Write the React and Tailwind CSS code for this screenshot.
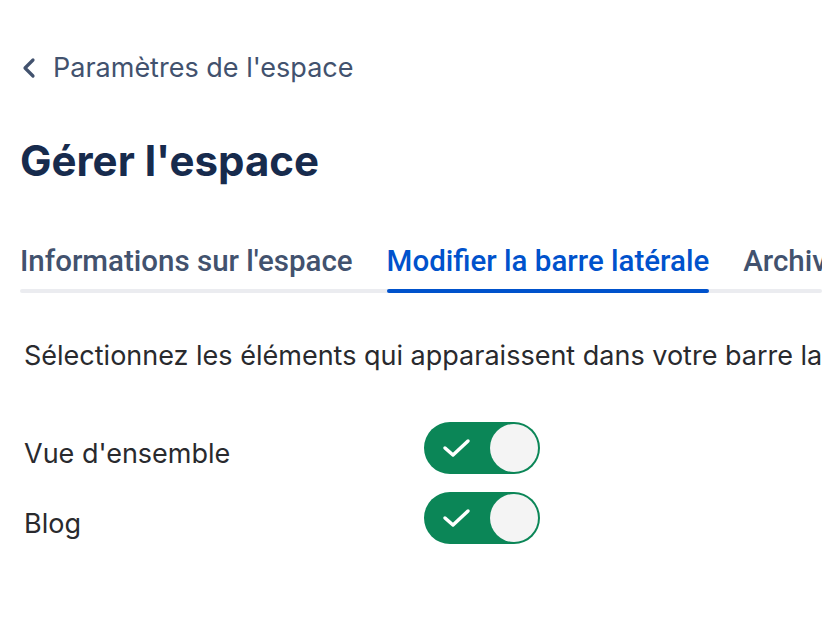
import { useState } from 'react';

export default function App() {
  const [items, setItems] = useState({ overview: true, blog: true });

  return (
    <div className="min-h-screen bg-white pl-5 pt-[46px] overflow-hidden" style={{ fontFamily: 'Inter, "Noto Sans", sans-serif' }}>
      <a className="flex items-center gap-[13px] text-[27px] leading-[44px] text-[#42526e]">
        <svg width="20" height="22" viewBox="0 0 20 22" fill="none">
          <path d="M13 3 L5 11 L13 19" stroke="#42526e" strokeWidth="3.2" strokeLinecap="round" strokeLinejoin="round" />
        </svg>
        <span>Paramètres de l'espace</span>
      </a>

      <h1 className="mt-[47px] text-[42px] leading-[48px] font-bold text-[#172b4d]">Gérer l'espace</h1>

      <div className="mt-[58px] relative">
        <div className="flex gap-[34px] whitespace-nowrap">
          <Tab label="Informations sur l'espace" />
          <Tab label="Modifier la barre latérale" active />
          <Tab label="Archiver l'espace" />
        </div>
        <div className="absolute left-0 right-0 bottom-0 h-1 rounded-full bg-[#ebecf0]" />
      </div>

      <p className="mt-[45px] pl-1 text-[27px] leading-[36px] whitespace-nowrap text-[#292a2e]">
        Sélectionnez les éléments qui apparaissent dans votre barre latérale.
      </p>

      <div className="mt-[48px] pl-1 flex flex-col gap-[18px]">
        <Row label="Vue d'ensemble" on={items.overview} onToggle={() => setItems((s) => ({ ...s, overview: !s.overview }))} />
        <Row label="Blog" on={items.blog} onToggle={() => setItems((s) => ({ ...s, blog: !s.blog }))} />
      </div>
    </div>
  );
}

function Tab({ label, active }) {
  return (
    <div className="relative z-10 pb-[14px]">
      <span className={`text-[29.5px] leading-[36px] font-medium ${active ? 'text-[#0052cc]' : 'text-[#42526e]'}`}
        style={{ fontFamily: 'Roboto, "Noto Sans", sans-serif' }}>{label}</span>
      {active && <div className="absolute left-0 right-0 bottom-0 h-1 rounded-full bg-[#0052cc]" />}
    </div>
  );
}

function Row({ label, on, onToggle }) {
  return (
    <div className="flex items-center h-[52px]">
      <span className="w-[400px] pt-3 text-[27px] text-[#292a2e]">{label}</span>
      <button onClick={onToggle}
        className={`relative w-[116px] h-[52px] rounded-full flex items-center ${on ? 'bg-[#0b8657]' : 'bg-[#8993a4]'}`}>
        <svg className="absolute left-[18px] top-[15px]" width="30" height="22" viewBox="0 0 30 22" fill="none">
          <path d="M3 11 L11 18 L26 4" stroke="white" strokeWidth="3.5" strokeLinecap="round" strokeLinejoin="round" />
        </svg>
        <span className={`absolute top-[2px] w-12 h-12 rounded-full bg-[#f4f4f4] ${on ? 'right-[2px]' : 'left-[2px]'}`} />
      </button>
    </div>
  );
}
